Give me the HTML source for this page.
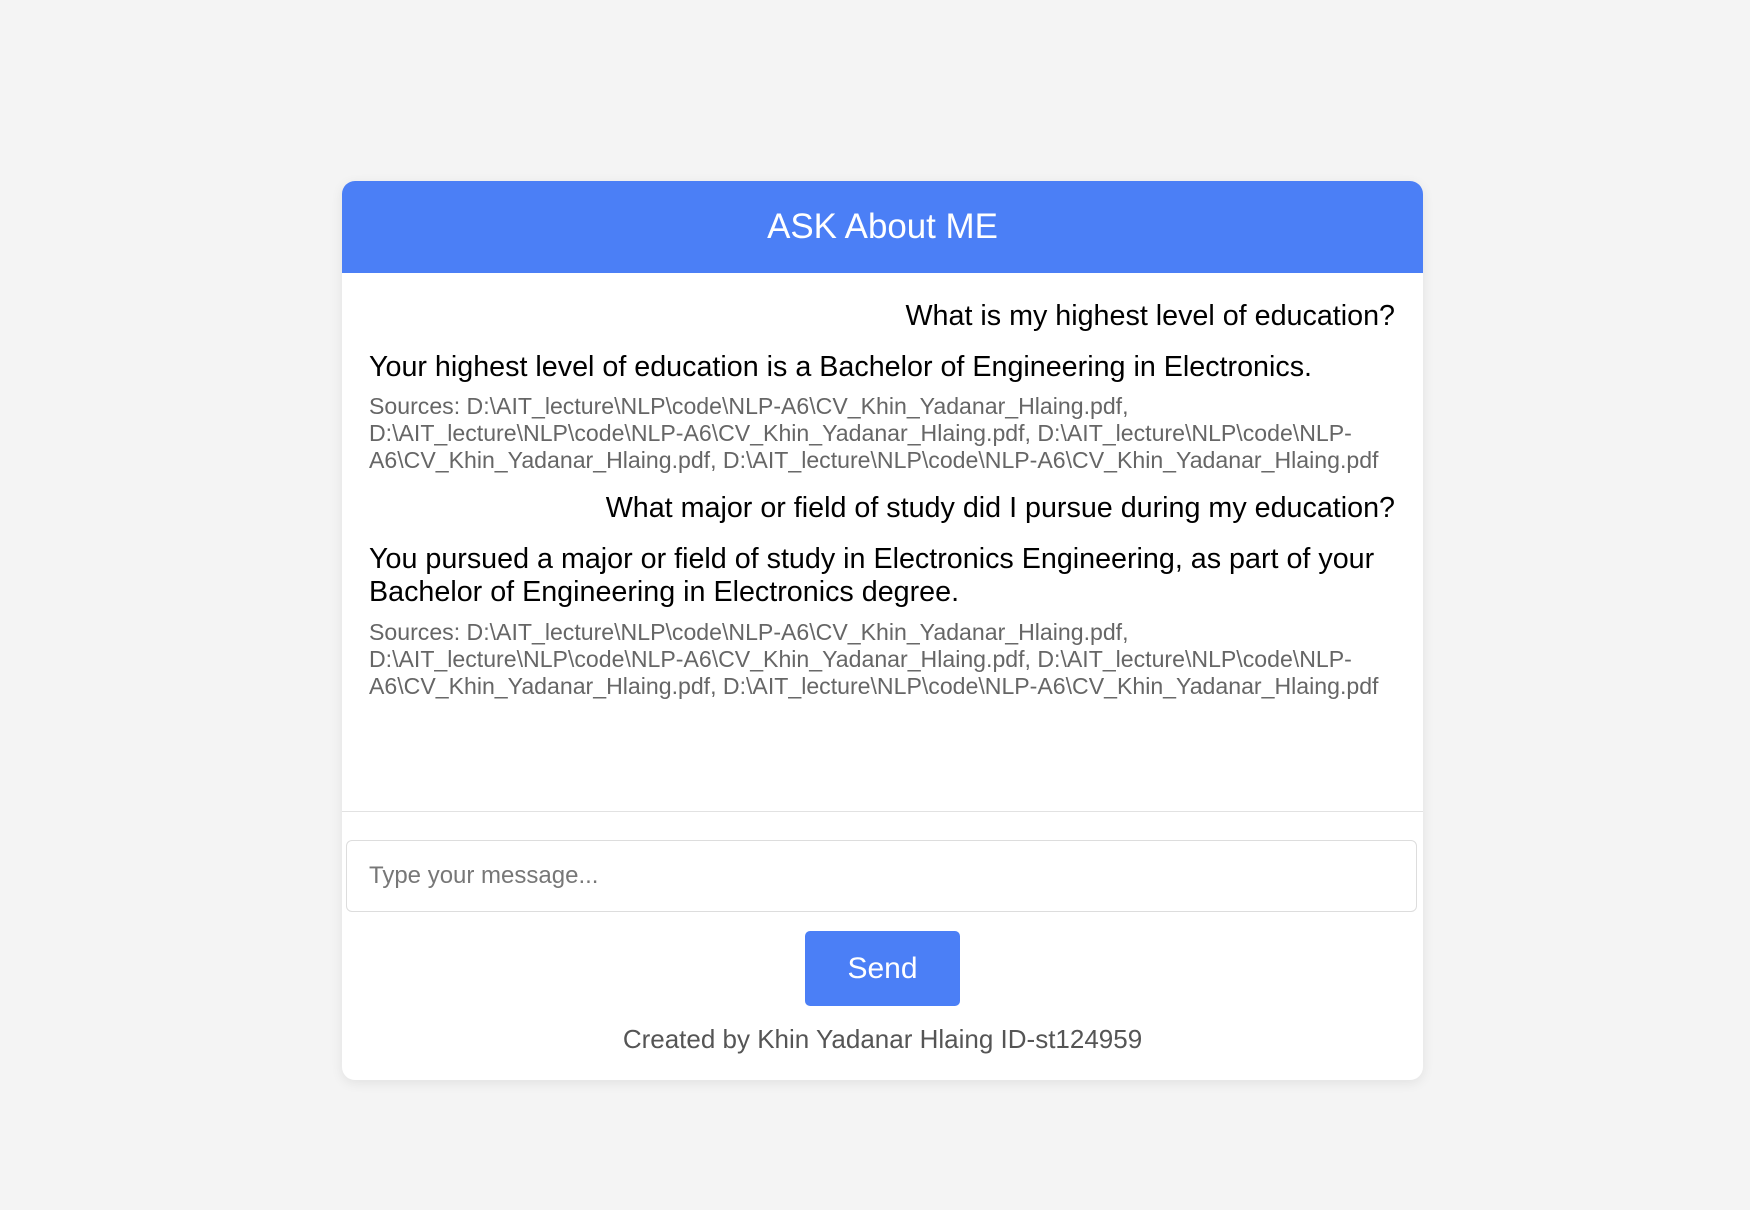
<!DOCTYPE html>
<html><head><meta charset="utf-8"><style>
html,body{margin:0;padding:0;background:#f4f4f4;width:1750px;height:1210px;overflow:hidden;font-family:"Liberation Sans",Arial,sans-serif}
.card{position:absolute;left:342px;top:181px;width:1081px;height:899px;background:#fff;border-radius:13px;box-shadow:0 3px 12px rgba(0,0,0,0.08);overflow:hidden}
.hdr{position:absolute;left:0;top:0;width:100%;height:92px;background:#4b7ff6;color:#fff;font-size:34.9px;text-align:center;line-height:92px}
.t{position:absolute;white-space:nowrap;color:#000;font-size:28.7px;line-height:33px}
.r{right:28px;text-align:right}
.l{left:27px}
.s{position:absolute;left:27px;white-space:nowrap;color:#666;font-size:23.1px;line-height:26.8px}
.sep{position:absolute;left:0;top:630px;width:100%;height:1px;background:#e2e2e2}
.inp{position:absolute;left:4px;top:659px;width:1071px;height:72px;border:1px solid #ddd;border-radius:6px;box-sizing:border-box;color:#777;font-size:24px;line-height:70px;padding-left:22px}
.btn{position:absolute;left:463px;top:750px;width:155px;height:75px;background:#4b7ff6;border-radius:5px;color:#fff;font-size:30px;line-height:75px;text-align:center}
.ft{position:absolute;left:0;width:100%;top:843px;text-align:center;color:#555;font-size:26px;line-height:30px}
</style></head><body>
<div class="card">
<div class="hdr">ASK About ME</div>
<div class="t r" style="top:119px">What is my highest level of education?</div>
<div class="t l" style="top:170px">Your highest level of education is a Bachelor of Engineering in Electronics.</div>
<div class="s" style="top:212px">Sources: D:\AIT_lecture\NLP\code\NLP-A6\CV_Khin_Yadanar_Hlaing.pdf,<br>D:\AIT_lecture\NLP\code\NLP-A6\CV_Khin_Yadanar_Hlaing.pdf, D:\AIT_lecture\NLP\code\NLP-<br>A6\CV_Khin_Yadanar_Hlaing.pdf, D:\AIT_lecture\NLP\code\NLP-A6\CV_Khin_Yadanar_Hlaing.pdf</div>
<div class="t r" style="top:311px">What major or field of study did I pursue during my education?</div>
<div class="t l" style="top:362px">You pursued a major or field of study in Electronics Engineering, as part of your<br>Bachelor of Engineering in Electronics degree.</div>
<div class="s" style="top:438px">Sources: D:\AIT_lecture\NLP\code\NLP-A6\CV_Khin_Yadanar_Hlaing.pdf,<br>D:\AIT_lecture\NLP\code\NLP-A6\CV_Khin_Yadanar_Hlaing.pdf, D:\AIT_lecture\NLP\code\NLP-<br>A6\CV_Khin_Yadanar_Hlaing.pdf, D:\AIT_lecture\NLP\code\NLP-A6\CV_Khin_Yadanar_Hlaing.pdf</div>
<div class="sep"></div>
<div class="inp">Type your message...</div>
<div class="btn">Send</div>
<div class="ft">Created by Khin Yadanar Hlaing ID-st124959</div>
</div>
</body></html>
